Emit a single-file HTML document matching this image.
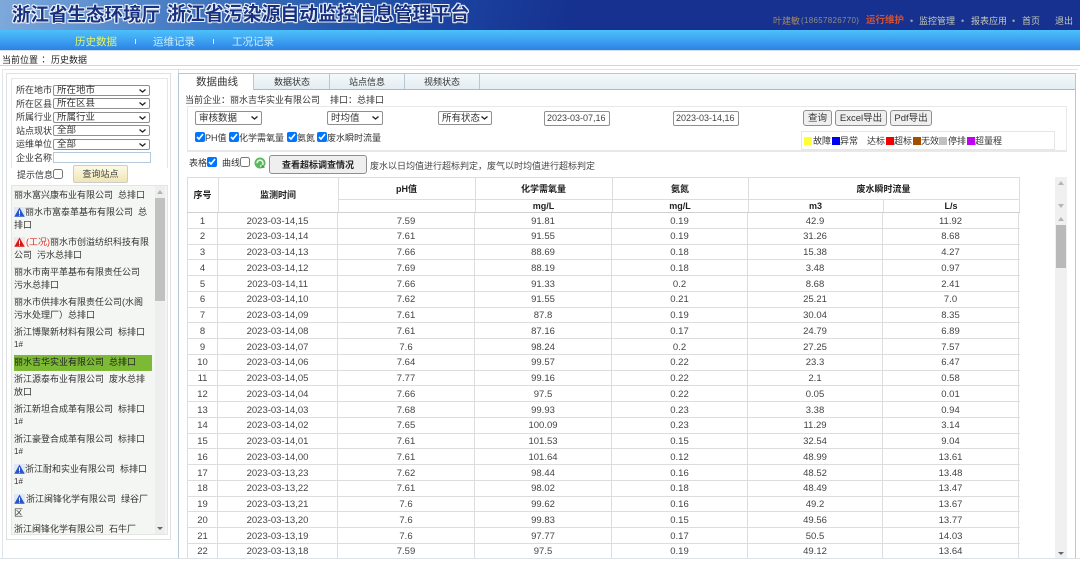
<!DOCTYPE html>
<html lang="zh">
<head>
<meta charset="utf-8">
<title>浙江省污染源自动监控信息管理平台</title>
<style>
html,body{margin:0;padding:0;background:#fff;}
body{position:relative;width:1080px;height:569px;overflow:hidden;font-family:"Liberation Sans","Noto Sans CJK SC",sans-serif;font-size:9px;color:#333;}
.a{position:absolute;box-sizing:border-box;}
.t{position:absolute;white-space:nowrap;line-height:14px;height:14px;color:#333;font-size:9px;}
.sel{position:absolute;box-sizing:border-box;background:#fff;border:1px solid #8f8f8f;border-radius:2px;font-size:9.5px;padding-left:3px;color:#333;white-space:nowrap;}
.sel svg{position:absolute;right:3px;top:50%;margin-top:-2px;}
.btn{position:absolute;box-sizing:border-box;background:#efefef;border:1px solid #8f8f8f;border-radius:3px;text-align:center;font-size:9.5px;color:#333;white-space:nowrap;}
input[type=checkbox]{position:absolute;margin:0;width:10px;height:10px;}
.sw{position:absolute;top:137px;width:8px;height:8px;}
.r{display:grid;grid-template-columns:31px 120px 137px 137px 136px 135px 136px;height:15.76px;box-sizing:border-box;border-bottom:1px solid #ddd;line-height:14px;font-size:9.5px;text-align:center;color:#444;}
.r span{border-right:1px solid #ddd;padding-top:1.5px;}
.r span:first-child{border-left:1px solid #ddd;}
.h{position:absolute;font-weight:bold;font-size:9px;color:#222;text-align:center;white-space:nowrap;line-height:14px;}
.ln{position:absolute;background:#ddd;}
.ti{position:absolute;white-space:nowrap;height:26px;line-height:26px;font-weight:bold;color:#17307f;text-shadow:-1px 0 #eef3fa,1px 0 #eef3fa,0 -1px #eef3fa,0 1px #eef3fa,-1px -1px #dfe8f5,1px -1px #dfe8f5,-1px 1px #dfe8f5,1px 1px #dfe8f5;}
.c{font-family:"Noto Sans CJK TC",sans-serif;}
</style>
</head>
<body>
<!-- header -->
<div class="a" style="left:0;top:0;width:1080px;height:30px;background:linear-gradient(100deg,#7fa9dc 0,#5f92d0 90px,#3e72bd 210px,#2558ab 340px,#1b43a0 440px,#16318f 570px,#16318f 100%);"></div>
<div class="ti" style="left:12px;top:2px;font-size:18.5px;">浙江省生态环境厅</div>
<div class="ti" style="left:167px;top:2px;font-size:18.9px;">浙江省污染源自动监控信息管理平台</div>
<div class="t" style="left:773px;top:14px;color:#a8895e;">叶建敏</div>
<div class="t" style="left:801px;top:14px;color:#8f8f86;font-size:8px;letter-spacing:.3px;">(18657826770)</div>
<div class="t" style="left:866px;top:14px;color:#d9502c;font-size:9.5px;font-weight:bold;">运行维护</div>
<div class="t" style="left:910px;top:14px;color:#9aa;">•</div>
<div class="t" style="left:919px;top:14px;color:#c4cbbb;">监控管理</div>
<div class="t" style="left:961px;top:14px;color:#9aa;">•</div>
<div class="t" style="left:971px;top:14px;color:#c4cbbb;">报表应用</div>
<div class="t" style="left:1012px;top:14px;color:#9aa;">•</div>
<div class="t" style="left:1022px;top:14px;color:#c4cbbb;">首页</div>
<div class="t" style="left:1055px;top:14px;color:#c4cbbb;">退出</div>
<!-- nav -->
<div class="a" style="left:0;top:30px;width:1080px;height:20px;background:linear-gradient(180deg,#4cc0fb 0,#3ea2f2 50%,#2c82e4 100%);"></div>
<div class="a" style="left:0;top:50px;width:1080px;height:1px;background:#cfe0f2;"></div>
<div class="t" style="left:75px;top:35px;font-size:10.5px;color:#e6f56a;">历史数据</div>
<div class="a" style="left:135px;top:39px;width:1px;height:5px;background:#cfe8fb;"></div>
<div class="t" style="left:153px;top:35px;font-size:10.5px;color:#cdeefa;">运维记录</div>
<div class="a" style="left:213px;top:39px;width:1px;height:5px;background:#cfe8fb;"></div>
<div class="t" style="left:232px;top:35px;font-size:10.5px;color:#cdeefa;">工况记录</div>
<!-- location -->
<div class="t" style="left:2px;top:53px;color:#222;">当前位置</div>
<div class="t c" style="left:39px;top:53px;color:#222;">：</div>
<div class="t" style="left:51px;top:53px;color:#222;">历史数据</div>
<div class="a" style="left:0;top:65px;width:1080px;height:1px;background:#ccd6dc;"></div>
<div class="a" style="left:2px;top:69px;width:1076px;height:1px;background:#dfe5e8;"></div>
<div class="a" style="left:2px;top:69px;width:1px;height:490px;background:#dfe5e8;"></div>

<!-- left panel -->
<div class="a" style="left:6px;top:73px;width:165px;height:467px;border:1px solid #e0e0e0;background:#fff;"></div>
<div class="a" style="left:11px;top:78px;width:157px;height:90px;border:1px solid #e6e6e6;border-bottom:0;"></div>
<div class="a" style="left:178px;top:69px;width:1px;height:490px;background:#d5dde2;"></div>
<div class="t" style="left:16px;top:83px;">所在地市</div>
<div class="sel" style="left:53px;top:85px;width:97px;height:11px;line-height:10px;">所在地市<svg width="7" height="4" viewBox="0 0 7 4"><path d="M.5.5 3.5 3 6.500.5" fill="none" stroke="#222" stroke-width="1.300"/></svg></div>
<div class="t" style="left:16px;top:96.500px;">所在区县</div>
<div class="sel" style="left:53px;top:98px;width:97px;height:11px;line-height:10px;">所在区县<svg width="7" height="4" viewBox="0 0 7 4"><path d="M.5.5 3.5 3 6.500.5" fill="none" stroke="#222" stroke-width="1.300"/></svg></div>
<div class="t" style="left:16px;top:110px;">所属行业</div>
<div class="sel" style="left:53px;top:112px;width:97px;height:11px;line-height:10px;">所属行业<svg width="7" height="4" viewBox="0 0 7 4"><path d="M.5.5 3.5 3 6.500.5" fill="none" stroke="#222" stroke-width="1.300"/></svg></div>
<div class="t" style="left:16px;top:123.500px;">站点现状</div>
<div class="sel" style="left:53px;top:125px;width:97px;height:11px;line-height:10px;">全部<svg width="7" height="4" viewBox="0 0 7 4"><path d="M.5.5 3.5 3 6.500.5" fill="none" stroke="#222" stroke-width="1.300"/></svg></div>
<div class="t" style="left:16px;top:137px;">运维单位</div>
<div class="sel" style="left:53px;top:139px;width:97px;height:11px;line-height:10px;">全部<svg width="7" height="4" viewBox="0 0 7 4"><path d="M.5.5 3.5 3 6.500.5" fill="none" stroke="#222" stroke-width="1.300"/></svg></div>
<div class="t" style="left:16px;top:151px;">企业名称</div>
<div class="a" style="left:53px;top:152px;width:98px;height:11px;background:#fff;border:1px solid #b5c9dc;"></div>
<div class="t" style="left:17px;top:168px;">提示信息</div>
<input type="checkbox" style="left:53px;top:169px;">
<div class="a" style="left:73px;top:165px;width:55px;height:18px;background:linear-gradient(180deg,#fdf9e6,#f0e6b4);border:1px solid #ccc;border-radius:2px;text-align:center;line-height:16px;color:#444;">查询站点</div>

<!-- station list -->
<div class="a" style="left:11px;top:185px;width:157px;height:350px;background:#f4f6f3;border:1px solid #e3e6e3;"></div>
<div class="a" style="left:155px;top:186px;width:10px;height:348px;background:#eee;"></div>
<div class="a" style="left:155px;top:198px;width:10px;height:103px;background:#c1c1c1;"></div>
<svg class="a" style="left:157px;top:190px;" width="6" height="4"><path d="M3 0 6 4H0z" fill="#b5b5b5"/></svg>
<svg class="a" style="left:157px;top:527px;" width="6" height="3"><path d="M0 0H6L3 3z" fill="#666"/></svg>
<div class="a" style="left:14px;top:355px;width:138px;height:16px;background:#7cb935;"></div>

<div class="t" style="left:14px;top:188px;">丽水富兴康布业有限公司&nbsp; 总排口</div>
<svg class="a" style="left:14px;top:207px;" width="11" height="10"><rect width="11" height="10" fill="#dfe8f4"/><path d="M5.500 .5 10.700 9.700H.3z" fill="#2a55c8"/><rect x="5" y="3.500" width="1" height="3.500" fill="#fff"/><rect x="5" y="7.700" width="1" height="1" fill="#fff"/></svg>
<div class="t" style="left:25px;top:205px;">丽水市富泰革基布有限公司&nbsp; 总</div>
<div class="t" style="left:14px;top:218px;">排口</div>
<svg class="a" style="left:14px;top:237px;" width="11" height="10"><rect width="11" height="10" fill="#f6e4e4"/><path d="M5.500 .5 10.700 9.700H.3z" fill="#d81818"/><rect x="5" y="3.500" width="1" height="3.500" fill="#fff"/><rect x="5" y="7.700" width="1" height="1" fill="#fff"/></svg>
<div class="t" style="left:26px;top:235px;"><span style="color:#e0302a;">(工况)</span>丽水市创溢纺织科技有限</div>
<div class="t" style="left:14px;top:248px;">公司&nbsp; 污水总排口</div>
<div class="t" style="left:14px;top:265px;">丽水市南平革基布有限责任公司</div>
<div class="t" style="left:14px;top:278px;">污水总排口</div>
<div class="t" style="left:14px;top:295px;">丽水市供排水有限责任公司(水阁</div>
<div class="t" style="left:14px;top:308px;">污水处理厂）总排口</div>
<div class="t" style="left:14px;top:325px;">浙江博聚新材料有限公司&nbsp; 标排口</div>
<div class="t" style="left:14px;top:338px;font-size:8px;">1#</div>
<div class="t" style="left:14px;top:355px;color:#222;">丽水吉华实业有限公司&nbsp; 总排口</div>
<div class="t" style="left:14px;top:372px;">浙江源泰布业有限公司&nbsp; 废水总排</div>
<div class="t" style="left:14px;top:385px;">放口</div>
<div class="t" style="left:14px;top:402px;">浙江新坦合成革有限公司&nbsp; 标排口</div>
<div class="t" style="left:14px;top:415px;font-size:8px;">1#</div>
<div class="t" style="left:14px;top:432px;">浙江豪登合成革有限公司&nbsp; 标排口</div>
<div class="t" style="left:14px;top:445px;font-size:8px;">1#</div>
<svg class="a" style="left:14px;top:464px;" width="11" height="10"><rect width="11" height="10" fill="#dfe8f4"/><path d="M5.500 .5 10.700 9.700H.3z" fill="#2a55c8"/><rect x="5" y="3.500" width="1" height="3.500" fill="#fff"/><rect x="5" y="7.700" width="1" height="1" fill="#fff"/></svg>
<div class="t" style="left:25px;top:462px;">浙江耐和实业有限公司&nbsp; 标排口</div>
<div class="t" style="left:14px;top:475px;font-size:8px;">1#</div>
<svg class="a" style="left:14px;top:494px;" width="11" height="10"><rect width="11" height="10" fill="#dfe8f4"/><path d="M5.500 .5 10.700 9.700H.3z" fill="#2a55c8"/><rect x="5" y="3.500" width="1" height="3.500" fill="#fff"/><rect x="5" y="7.700" width="1" height="1" fill="#fff"/></svg>
<div class="t" style="left:26px;top:492px;">浙江闽锋化学有限公司&nbsp; 绿谷厂</div>
<div class="t" style="left:14px;top:506px;">区</div>
<div class="t" style="left:14px;top:522px;">浙江闽锋化学有限公司&nbsp; 石牛厂</div>

<!-- tabs -->
<div class="a" style="left:178px;top:73px;width:898px;height:17px;background:linear-gradient(180deg,#f4f8fa,#e3edf2);border:1px solid #b4c8d6;border-bottom:1px solid #a5bccb;"></div>
<div class="a" style="left:178px;top:73px;width:1px;height:486px;background:#b4c8d6;"></div>
<div class="a" style="left:1075px;top:73px;width:1px;height:486px;background:#b4c8d6;"></div>
<div class="a" style="left:179px;top:74px;width:75px;height:16px;background:#fff;border-right:1px solid #b4c8d6;"></div>
<div class="a" style="left:329px;top:74px;width:1px;height:15px;background:#b4c8d6;"></div>
<div class="a" style="left:404px;top:74px;width:1px;height:15px;background:#b4c8d6;"></div>
<div class="a" style="left:479px;top:74px;width:1px;height:15px;background:#b4c8d6;"></div>
<div class="t" style="left:196px;top:75px;font-size:10.5px;">数据曲线</div>
<div class="t" style="left:274px;top:75px;">数据状态</div>
<div class="t" style="left:349px;top:75px;">站点信息</div>
<div class="t" style="left:424px;top:75px;">视频状态</div>

<div class="t" style="left:185px;top:93px;">当前企业<span class="c">：</span>丽水吉华实业有限公司</div>
<div class="t" style="left:330px;top:93px;">排口<span class="c">：</span>总排口</div>

<!-- filter box -->
<div class="a" style="left:187px;top:106px;width:880px;height:46px;border:1px solid #e8e8e8;border-bottom-width:2px;"></div>
<div class="sel" style="left:195px;top:111px;width:67px;height:14px;line-height:13px;">审核数据<svg width="7" height="4" viewBox="0 0 7 4"><path d="M.5.5 3.5 3 6.500.5" fill="none" stroke="#222" stroke-width="1.300"/></svg></div>
<div class="sel" style="left:327px;top:111px;width:56px;height:14px;line-height:13px;">时均值<svg width="7" height="4" viewBox="0 0 7 4"><path d="M.5.5 3.5 3 6.500.5" fill="none" stroke="#222" stroke-width="1.300"/></svg></div>
<div class="sel" style="left:438px;top:111px;width:54px;height:14px;line-height:13px;">所有状态<svg width="7" height="4" viewBox="0 0 7 4"><path d="M.5.5 3.5 3 6.500.5" fill="none" stroke="#222" stroke-width="1.300"/></svg></div>
<div class="sel" style="left:544px;top:111px;width:66px;height:15px;line-height:13px;padding-left:2px;font-size:9px;color:#444;">2023-03-07,16</div>
<div class="sel" style="left:673px;top:111px;width:66px;height:15px;line-height:13px;padding-left:2px;font-size:9px;color:#444;">2023-03-14,16</div>
<div class="btn" style="left:803px;top:110px;width:29px;height:16px;line-height:15px;">查询</div>
<div class="btn" style="left:835px;top:110px;width:52px;height:16px;line-height:15px;">Excel导出</div>
<div class="btn" style="left:890px;top:110px;width:42px;height:16px;line-height:15px;">Pdf导出</div>

<input type="checkbox" checked style="left:195px;top:132px;">
<div class="t" style="left:205px;top:131px;">PH值</div>
<input type="checkbox" checked style="left:229px;top:132px;">
<div class="t" style="left:239px;top:131px;">化学需氧量</div>
<input type="checkbox" checked style="left:287px;top:132px;">
<div class="t" style="left:297px;top:131px;">氨氮</div>
<input type="checkbox" checked style="left:317px;top:132px;">
<div class="t" style="left:327px;top:131px;">废水瞬时流量</div>

<!-- legend -->
<div class="a" style="left:801px;top:131px;width:254px;height:19px;border:1px solid #e6e6e6;"></div>
<div class="sw" style="left:804px;background:#ffff33;"></div><div class="t" style="left:813px;top:134px;">故障</div>
<div class="sw" style="left:832px;background:#0000f0;"></div><div class="t" style="left:840px;top:134px;">异常</div>
<div class="t" style="left:867px;top:134px;">达标</div>
<div class="sw" style="left:886px;background:#f00000;"></div><div class="t" style="left:894px;top:134px;">超标</div>
<div class="sw" style="left:913px;background:#a05000;"></div><div class="t" style="left:921px;top:134px;">无效</div>
<div class="sw" style="left:939px;background:#c0c0c0;"></div><div class="t" style="left:948px;top:134px;">停排</div>
<div class="sw" style="left:967px;background:#c000f0;"></div><div class="t" style="left:975px;top:134px;">超量程</div>

<!-- toolbar -->
<div class="t" style="left:189px;top:156px;">表格</div>
<input type="checkbox" checked style="left:207px;top:157px;">
<div class="t" style="left:222px;top:156px;">曲线</div>
<input type="checkbox" style="left:240px;top:157px;">
<svg class="a" style="left:254px;top:157px;" width="12" height="12" viewBox="0 0 12 12"><circle cx="6" cy="6" r="5.500" fill="#5cb85c"/><path d="M3 6.200a3 3 0 1 1 3 3" fill="none" stroke="#e8f5e8" stroke-width="1.600"/><path d="M8 7.500 11 11 7 10.500z" fill="#3c9a3c"/></svg>
<div class="btn" style="left:269px;top:155px;width:98px;height:19px;line-height:19px;font-weight:bold;font-size:9px;color:#222;">查看超标调查情况</div>
<div class="t" style="left:370px;top:159px;color:#444;">废水以日均值进行超标判定<span class="c">，</span>废气以时均值进行超标判定</div>

<!-- table header -->
<div class="a" style="left:187px;top:177px;width:833px;height:1px;background:#ddd;"></div>
<div class="ln" style="left:187px;top:177px;width:1px;height:36px;"></div>
<div class="ln" style="left:218px;top:177px;width:1px;height:36px;"></div>
<div class="ln" style="left:338px;top:177px;width:1px;height:36px;"></div>
<div class="ln" style="left:475px;top:177px;width:1px;height:36px;"></div>
<div class="ln" style="left:612px;top:177px;width:1px;height:36px;"></div>
<div class="ln" style="left:748px;top:177px;width:1px;height:36px;"></div>
<div class="ln" style="left:883px;top:199px;width:1px;height:14px;"></div>
<div class="ln" style="left:1019px;top:177px;width:1px;height:36px;"></div>
<div class="ln" style="left:338px;top:199px;width:681px;height:1px;"></div>
<div class="ln" style="left:187px;top:212px;width:833px;height:1px;background:#d0d0d0;"></div>
<div class="h" style="left:187px;top:188px;width:31px;">序号</div>
<div class="h" style="left:218px;top:188px;width:120px;">监测时间</div>
<div class="h" style="left:338px;top:182px;width:137px;">pH值</div>
<div class="h" style="left:475px;top:182px;width:137px;">化学需氧量</div>
<div class="h" style="left:612px;top:182px;width:136px;">氨氮</div>
<div class="h" style="left:748px;top:182px;width:271px;">废水瞬时流量</div>
<div class="h" style="left:475px;top:199px;width:137px;">mg/L</div>
<div class="h" style="left:612px;top:199px;width:136px;">mg/L</div>
<div class="h" style="left:748px;top:199px;width:135px;">m3</div>
<div class="h" style="left:883px;top:199px;width:136px;">L/s</div>

<!-- table rows -->
<div class="a" style="left:187px;top:213px;width:833px;height:345px;overflow:hidden;">
<div class="r"><span>1</span><span>2023-03-14,15</span><span>7.59</span><span>91.81</span><span>0.19</span><span>42.9</span><span>11.92</span></div>
<div class="r"><span>2</span><span>2023-03-14,14</span><span>7.61</span><span>91.55</span><span>0.19</span><span>31.26</span><span>8.68</span></div>
<div class="r"><span>3</span><span>2023-03-14,13</span><span>7.66</span><span>88.69</span><span>0.18</span><span>15.38</span><span>4.27</span></div>
<div class="r"><span>4</span><span>2023-03-14,12</span><span>7.69</span><span>88.19</span><span>0.18</span><span>3.48</span><span>0.97</span></div>
<div class="r"><span>5</span><span>2023-03-14,11</span><span>7.66</span><span>91.33</span><span>0.2</span><span>8.68</span><span>2.41</span></div>
<div class="r"><span>6</span><span>2023-03-14,10</span><span>7.62</span><span>91.55</span><span>0.21</span><span>25.21</span><span>7.0</span></div>
<div class="r"><span>7</span><span>2023-03-14,09</span><span>7.61</span><span>87.8</span><span>0.19</span><span>30.04</span><span>8.35</span></div>
<div class="r"><span>8</span><span>2023-03-14,08</span><span>7.61</span><span>87.16</span><span>0.17</span><span>24.79</span><span>6.89</span></div>
<div class="r"><span>9</span><span>2023-03-14,07</span><span>7.6</span><span>98.24</span><span>0.2</span><span>27.25</span><span>7.57</span></div>
<div class="r"><span>10</span><span>2023-03-14,06</span><span>7.64</span><span>99.57</span><span>0.22</span><span>23.3</span><span>6.47</span></div>
<div class="r"><span>11</span><span>2023-03-14,05</span><span>7.77</span><span>99.16</span><span>0.22</span><span>2.1</span><span>0.58</span></div>
<div class="r"><span>12</span><span>2023-03-14,04</span><span>7.66</span><span>97.5</span><span>0.22</span><span>0.05</span><span>0.01</span></div>
<div class="r"><span>13</span><span>2023-03-14,03</span><span>7.68</span><span>99.93</span><span>0.23</span><span>3.38</span><span>0.94</span></div>
<div class="r"><span>14</span><span>2023-03-14,02</span><span>7.65</span><span>100.09</span><span>0.23</span><span>11.29</span><span>3.14</span></div>
<div class="r"><span>15</span><span>2023-03-14,01</span><span>7.61</span><span>101.53</span><span>0.15</span><span>32.54</span><span>9.04</span></div>
<div class="r"><span>16</span><span>2023-03-14,00</span><span>7.61</span><span>101.64</span><span>0.12</span><span>48.99</span><span>13.61</span></div>
<div class="r"><span>17</span><span>2023-03-13,23</span><span>7.62</span><span>98.44</span><span>0.16</span><span>48.52</span><span>13.48</span></div>
<div class="r"><span>18</span><span>2023-03-13,22</span><span>7.61</span><span>98.02</span><span>0.18</span><span>48.49</span><span>13.47</span></div>
<div class="r"><span>19</span><span>2023-03-13,21</span><span>7.6</span><span>99.62</span><span>0.16</span><span>49.2</span><span>13.67</span></div>
<div class="r"><span>20</span><span>2023-03-13,20</span><span>7.6</span><span>99.83</span><span>0.15</span><span>49.56</span><span>13.77</span></div>
<div class="r"><span>21</span><span>2023-03-13,19</span><span>7.6</span><span>97.77</span><span>0.17</span><span>50.5</span><span>14.03</span></div>
<div class="r"><span>22</span><span>2023-03-13,18</span><span>7.59</span><span>97.5</span><span>0.19</span><span>49.12</span><span>13.64</span></div>
</div>

<!-- right scrollbars -->
<div class="a" style="left:1055px;top:177px;width:12px;height:381px;background:#f0f0f0;"></div>
<div class="a" style="left:1056px;top:225px;width:10px;height:43px;background:#b9b9b9;"></div>
<svg class="a" style="left:1058px;top:181px;" width="6" height="4"><path d="M3 0 6 4H0z" fill="#b5b5b5"/></svg>
<svg class="a" style="left:1058px;top:204px;" width="6" height="4"><path d="M0 0H6L3 4z" fill="#b5b5b5"/></svg>
<svg class="a" style="left:1058px;top:217px;" width="6" height="4"><path d="M3 0 6 4H0z" fill="#b5b5b5"/></svg>
<svg class="a" style="left:1058px;top:552px;" width="6" height="3"><path d="M0 0H6L3 3z" fill="#666"/></svg>
<div class="a" style="left:0;top:558px;width:1080px;height:1px;background:#dde2e6;"></div>
</body>
</html>
